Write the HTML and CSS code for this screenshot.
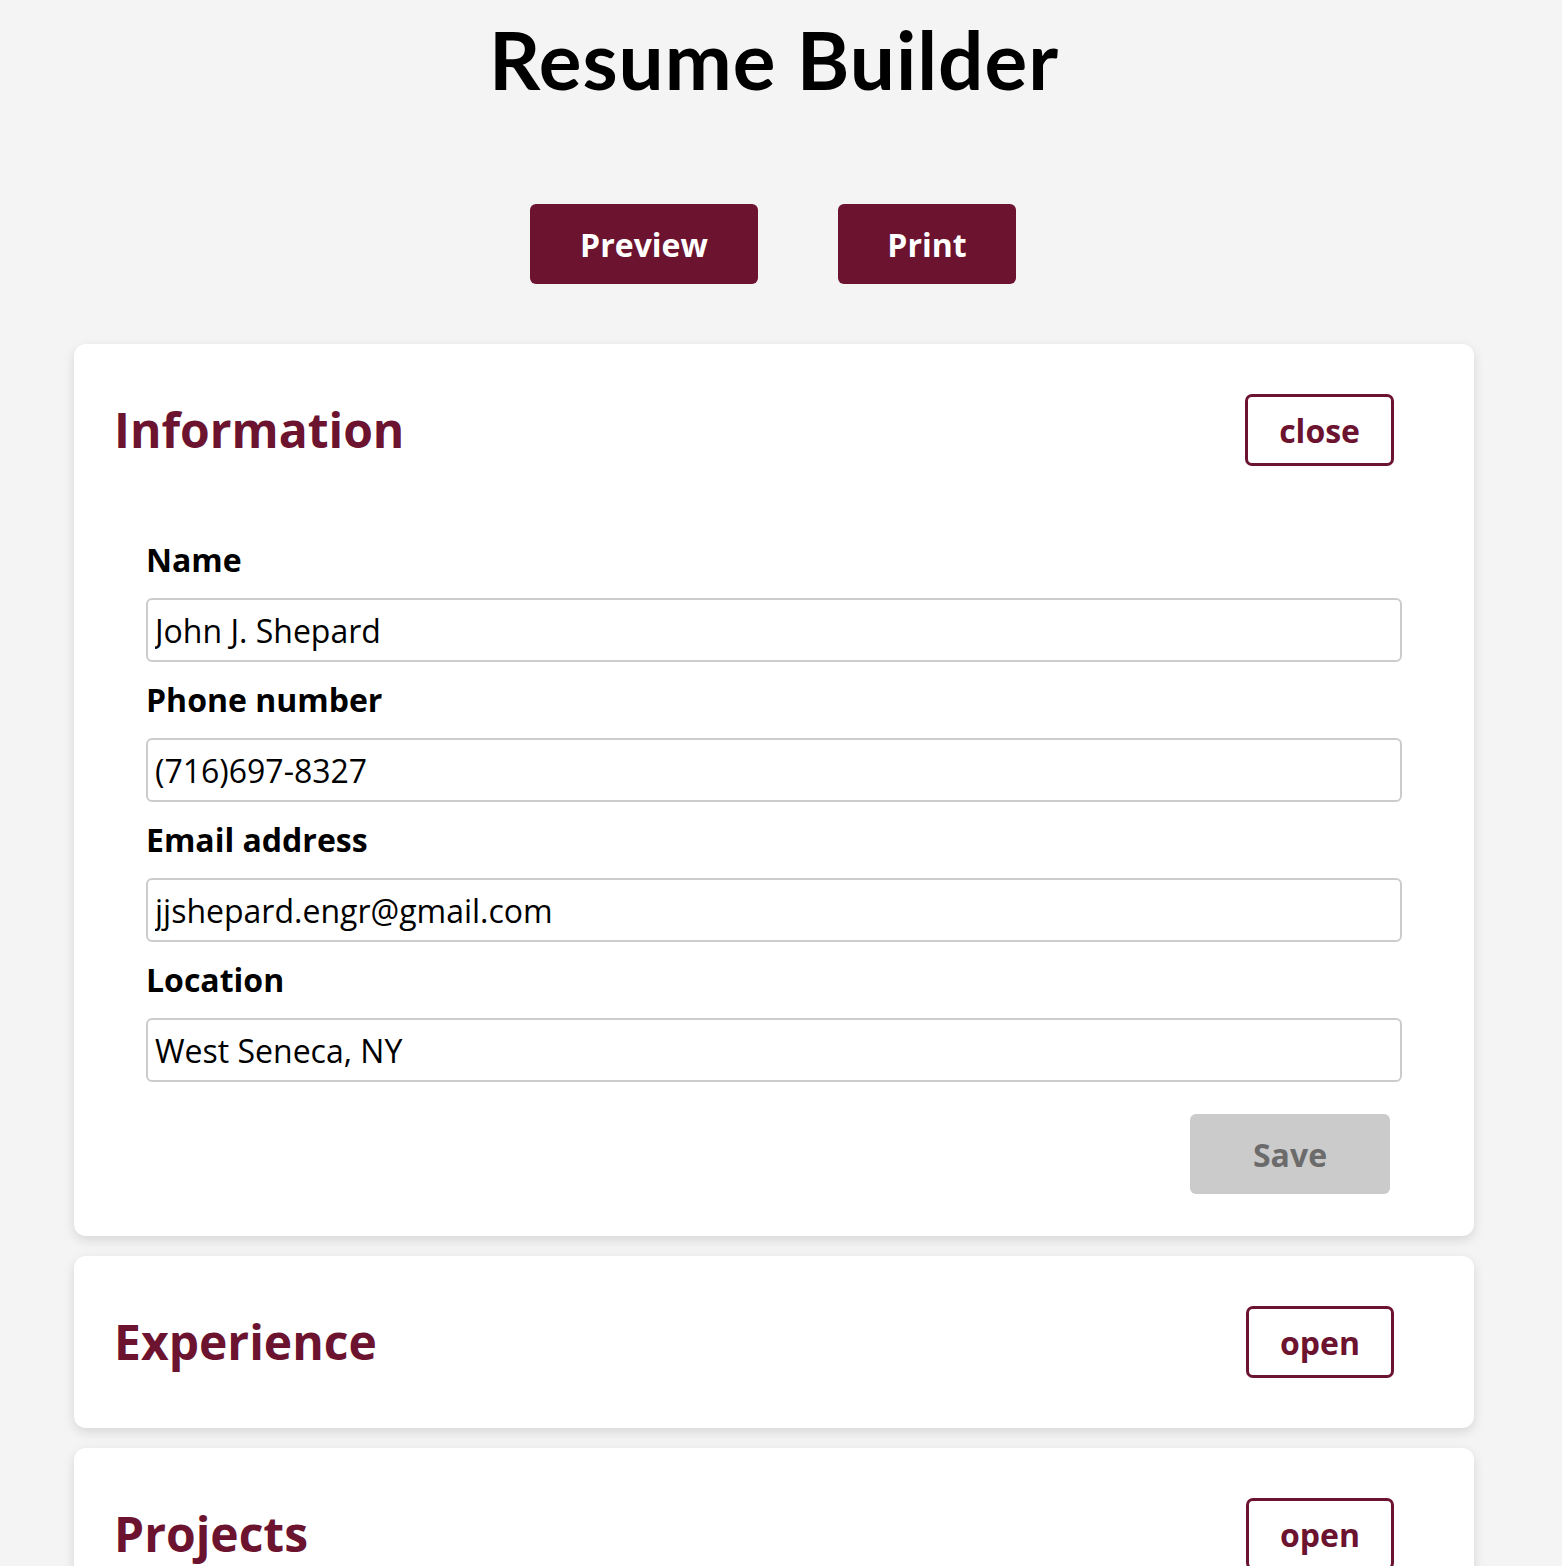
FILE: index.html
```html
<!DOCTYPE html>
<html lang="en">
<head>
<meta charset="utf-8">
<title>Resume Builder</title>
<link rel="stylesheet" href="styles.css">
</head>
<body>
<div class="page">
  <h1 class="title">Resume Builder</h1>
  <div class="actions">
    <button class="btn btn-primary btn-preview">Preview</button>
    <button class="btn btn-primary btn-print">Print</button>
  </div>

  <section class="card">
    <div class="card-header">
      <h2 class="card-title">Information</h2>
      <button class="btn-outline">close</button>
    </div>
    <form class="form">
      <label class="field-label" for="name">Name</label>
      <input class="field-input" id="name" type="text" value="John J. Shepard">
      <label class="field-label" for="phone">Phone number</label>
      <input class="field-input" id="phone" type="text" value="(716)697-8327">
      <label class="field-label" for="email">Email address</label>
      <input class="field-input" id="email" type="text" value="jjshepard.engr@gmail.com">
      <label class="field-label" for="loc">Location</label>
      <input class="field-input" id="loc" type="text" value="West Seneca, NY">
      <div class="form-footer">
        <button class="btn btn-save" type="button">Save</button>
      </div>
    </form>
  </section>

  <section class="card">
    <div class="card-header">
      <h2 class="card-title">Experience</h2>
      <button class="btn-outline">open</button>
    </div>
  </section>

  <section class="card">
    <div class="card-header">
      <h2 class="card-title">Projects</h2>
      <button class="btn-outline">open</button>
    </div>
  </section>
</div>
</body>
</html>
```

FILE: styles.css
```css
* { box-sizing: border-box; }
html, body {
  margin: 0;
  background: #f4f4f4;
  font-family: "Open Sans", "Liberation Sans", sans-serif;
  color: #000;
}
.page {
  width: 1548px;
  padding-bottom: 40px;
}
.title {
  margin: 0;
  padding-top: 9px;
  text-align: center;
  font-family: Lato, "Open Sans", sans-serif;
  font-weight: 700;
  font-size: 80px;
  line-height: 100px;
  letter-spacing: 1px;
}
.actions {
  display: flex;
  justify-content: center;
  gap: 80px;
  margin-top: 95px;
  padding-right: 2px;
}
.btn {
  border: none;
  border-radius: 6px;
  font-family: "Open Sans", sans-serif;
  font-weight: 700;
  font-size: 32px;
  height: 80px;
  cursor: pointer;
}
.btn-primary {
  background: #6c1330;
  color: #fff;
}
.btn-preview { width: 228px; }
.btn-print { width: 178px; }

.card {
  width: 1400px;
  margin: 60px auto 0;
  background: #fff;
  border-radius: 12px;
  box-shadow: 0 4px 12px rgba(0,0,0,0.12);
  padding: 40px;
}
.card + .card { margin-top: 20px; }
.card-header {
  display: flex;
  justify-content: space-between;
  align-items: center;
  padding: 10px 40px 10px 0;
}
.card-title {
  margin: 0;
  color: #6c1330;
  font-size: 48px;
  font-weight: 700;
  line-height: 72px;
}
.btn-outline {
  height: 72px;
  padding: 0 31px;
  background: #fff;
  border: 3px solid #6c1330;
  border-radius: 7px;
  color: #6c1330;
  font-family: "Open Sans", sans-serif;
  font-weight: 700;
  font-size: 32px;
  cursor: pointer;
}
.form {
  display: flex;
  flex-direction: column;
  padding: 46px 32px 0;
}
.field-label {
  font-size: 32px;
  font-weight: 700;
  line-height: 44px;
  margin: 16px 0;
}
.field-input {
  height: 64px;
  width: 100%;
  border: 2px solid #cccccc;
  border-radius: 6px;
  padding: 0 7px;
  font-family: "Open Sans", sans-serif;
  font-size: 32px;
  color: #000;
  background: #fff;
}
.form-footer {
  display: flex;
  justify-content: flex-end;
  margin-top: 32px;
  margin-bottom: 2px;
}
.btn-save {
  width: 200px;
  margin-right: 12px;
  background: #cbcbcb;
  color: #6b6b6b;
}
```
